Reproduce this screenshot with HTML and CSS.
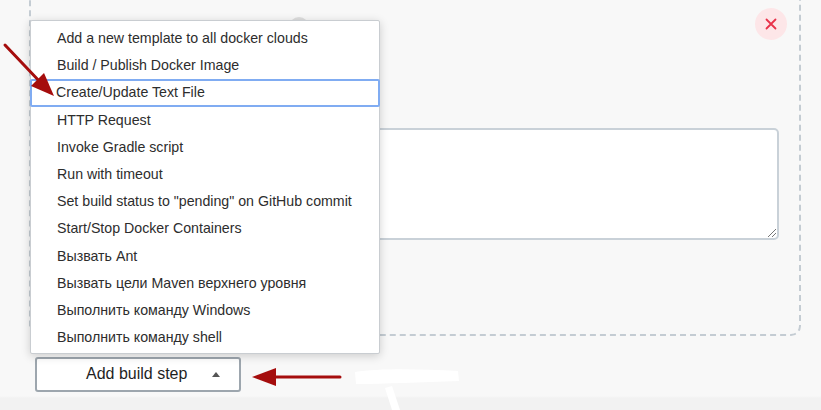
FILE: index.html
```html
<!DOCTYPE html>
<html lang="en">
<head>
<meta charset="utf-8">
<title>Add build step</title>
<link rel="stylesheet" href="styles.css">
</head>
<body>
<div class="page">
  <section class="step-card">
    <div class="step-head">
      <div class="step-name">
        <span class="handle"></span>
        <span class="step-title">Create/Update Text File</span>
        <span class="help">?</span>
      </div>
      <button class="close" aria-label="Delete">
        <svg width="12" height="12" viewBox="0 0 12 12"><path d="M1.5 1.5L10.5 10.5M10.5 1.5L1.5 10.5" stroke="#e8324a" stroke-width="1.8" stroke-linecap="round"/></svg>
      </button>
    </div>
    <div class="field-label">File Path</div>
    <div class="textarea"><span class="grip"></span></div>
  </section>

  <div class="add-row">
    <button class="add-btn"><span class="add-label">Add build step</span><span class="caret"></span></button>
  </div>

  <ul class="menu">
    <li>Add a new template to all docker clouds</li>
    <li>Build / Publish Docker Image</li>
    <li class="active">Create/Update Text File</li>
    <li>HTTP Request</li>
    <li>Invoke Gradle script</li>
    <li>Run with timeout</li>
    <li>Set build status to "pending" on GitHub commit</li>
    <li>Start/Stop Docker Containers</li>
    <li>Вызвать Ant</li>
    <li>Вызвать цели Maven верхнего уровня</li>
    <li>Выполнить команду Windows</li>
    <li>Выполнить команду shell</li>
  </ul>

  <svg class="arrows" width="821" height="410" viewBox="0 0 821 410">
    <path d="M355 372 C380 368 420 369 458 371 L459 381 C420 382 385 384 356 384 Z" fill="#ffffff"/>
    <path d="M385 388 L392 386 L400 410 L392 410 Z" fill="#ffffff"/>
    <line x1="5" y1="45" x2="42" y2="84" stroke="#a50d0d" stroke-width="3" stroke-linecap="round"/>
    <polygon points="54,96 31,86 44,73" fill="#a50d0d"/>
    <line x1="270" y1="377" x2="340" y2="377" stroke="#a50d0d" stroke-width="3" stroke-linecap="round"/>
    <polygon points="252,377 276,368 276,386" fill="#a50d0d"/>
  </svg>
</div>
</body>
</html>
```

FILE: styles.css
```css
* { box-sizing: border-box; }

html, body {
  margin: 0;
  padding: 0;
  background: #f7f7f7;
  overflow: hidden;
}

body {
  font-family: "Liberation Sans", Arial, sans-serif;
  color: #2b2b2b;
  width: 821px;
  height: 410px;
}

.page {
  position: relative;
  display: flow-root;
  width: 821px;
  height: 410px;
  overflow: hidden;
  background: linear-gradient(#f8f8f8 0, #f8f8f8 396px, #f2f2f2 398px);
}

.step-card {
  margin: -40px 0 0 29px;
  width: 772px;
  height: 376px;
  border: 2px dashed #c4ccd3;
  border-radius: 10px;
  padding: 46px 20px 0 24px;
  display: flex;
  flex-direction: column;
}

.step-head {
  display: flex;
  align-items: center;
  height: 32px;
}

.step-name {
  display: flex;
  align-items: center;
  padding-top: 5px;
}

.handle {
  width: 12px;
  height: 10px;
  border-top: 2px solid #9aa1a8;
  border-bottom: 2px solid #9aa1a8;
  margin-right: 24px;
}

.step-title {
  font-size: 17px;
  font-weight: bold;
  color: #333;
}

.help {
  width: 20px;
  height: 20px;
  border-radius: 50%;
  background: #dedede;
  color: #666;
  font-size: 12px;
  font-weight: bold;
  display: inline-flex;
  align-items: center;
  justify-content: center;
  margin-left: 10px;
}

.close {
  margin-left: auto;
  margin-right: -8px;
  width: 32px;
  height: 32px;
  border: none;
  border-radius: 50%;
  background: #fde6e8;
  display: flex;
  align-items: center;
  justify-content: center;
  padding: 0;
}

.field-label {
  margin-top: 69px;
  height: 19px;
  font-size: 14px;
  font-weight: bold;
}

.textarea {
  position: relative;
  height: 112px;
  background: #ffffff;
  border: 2px solid #c9d1d8;
  border-radius: 5px;
}

.grip {
  position: absolute;
  right: 1px;
  bottom: 1px;
  width: 8px;
  height: 8px;
  background: linear-gradient(135deg, transparent 45%, #777 45%, #777 55%, transparent 55%, transparent 70%, #777 70%, #777 80%, transparent 80%);
}

.add-row {
  padding: 21px 0 0 35px;
}

.add-btn {
  width: 206px;
  height: 35px;
  background: #ffffff;
  border: 2px solid #9da6ae;
  border-radius: 3px;
  display: flex;
  align-items: center;
  padding: 0 0 0 49px;
  font-family: "Liberation Sans", Arial, sans-serif;
  font-size: 16px;
  color: #1f1f1f;
}

.add-label { margin-top: -1px; }

.caret {
  margin-left: 25px;
  width: 0;
  height: 0;
  border-left: 4.5px solid transparent;
  border-right: 4.5px solid transparent;
  border-bottom: 5px solid #555;
}

.menu {
  position: absolute;
  left: 30px;
  top: 20px;
  width: 350px;
  height: 334px;
  margin: 0;
  padding: 4px 0 0 0;
  list-style: none;
  background: #ffffff;
  border: 1px solid #c9cdd1;
  border-radius: 2px;
  box-shadow: 0 2px 10px rgba(0, 0, 0, 0.18);
  font-size: 14.2px;
  color: #2d2d2d;
}

.menu li {
  height: 27.2px;
  line-height: 27px;
  padding-left: 26px;
  white-space: nowrap;
}

.menu li.active {
  border: 2px solid #80acf2;
  border-radius: 2px;
  line-height: 23px;
  padding-left: 24px;
  margin: 0 -1px;
}

.arrows {
  position: absolute;
  left: 0;
  top: 0;
  pointer-events: none;
}
```
